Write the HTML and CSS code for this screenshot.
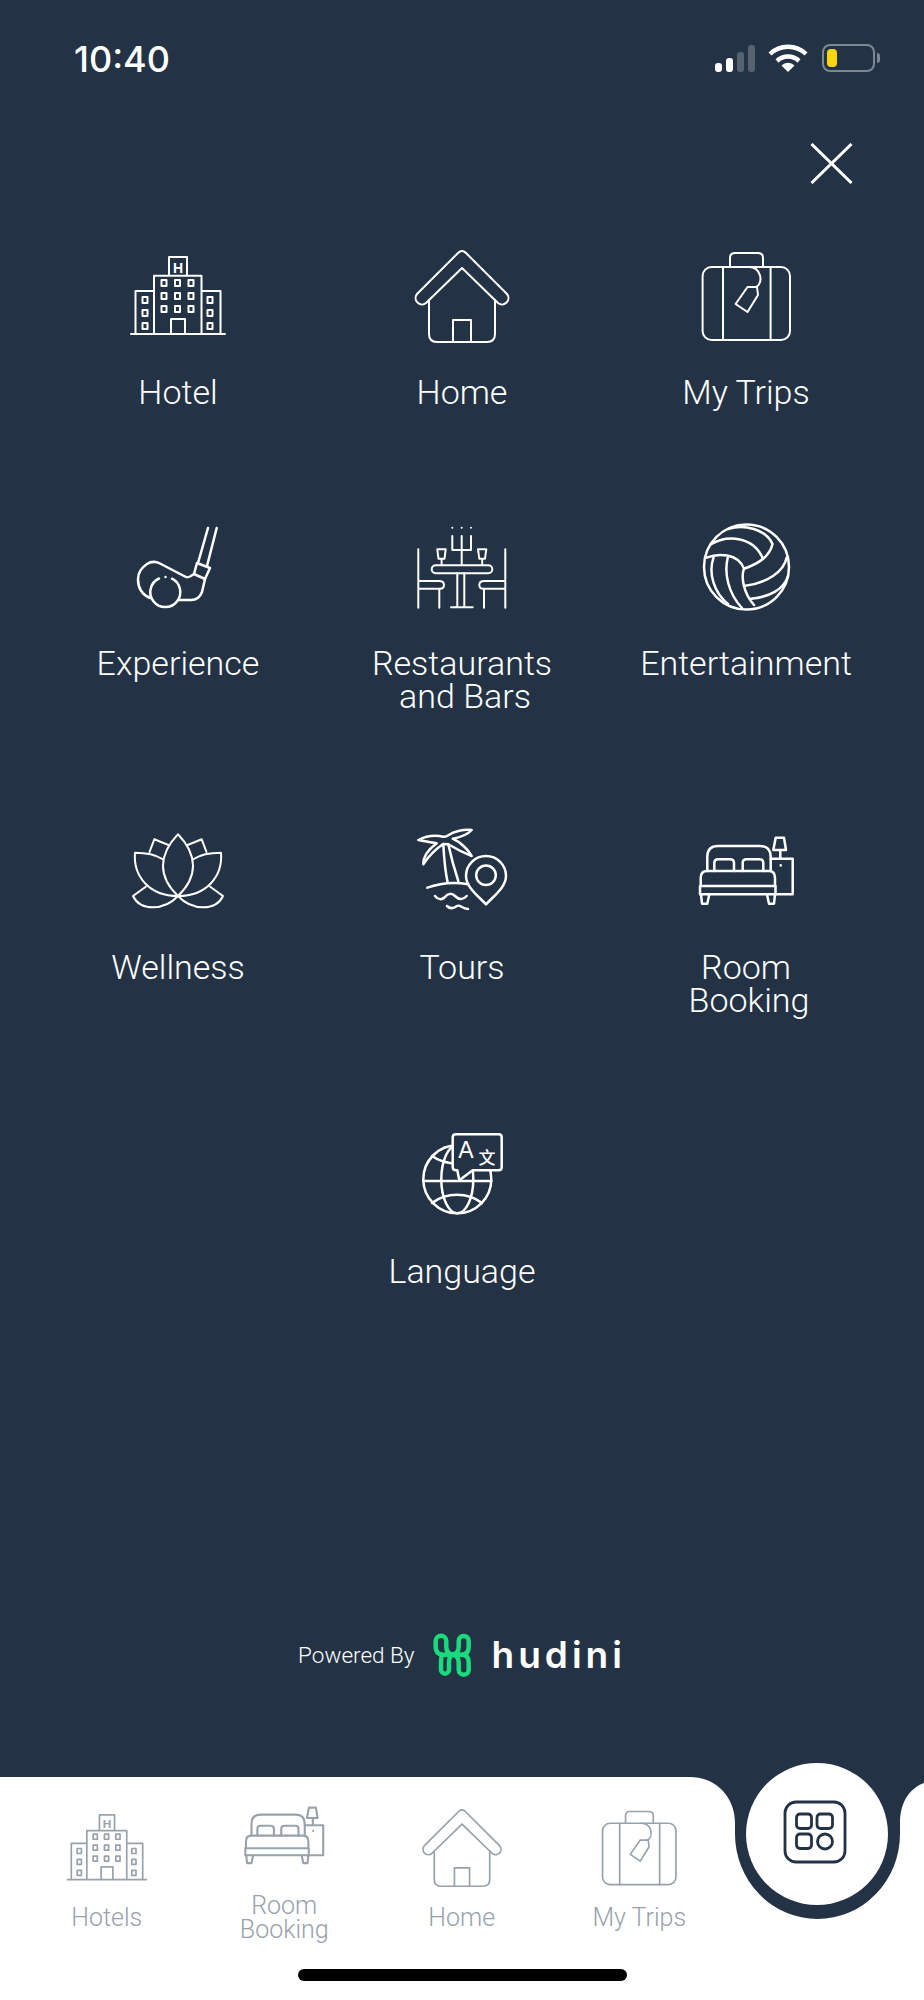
FILE: index.html
```html
<!DOCTYPE html>
<html lang="en">
<head>
<meta charset="utf-8">
<title>Menu</title>
<link rel="stylesheet" href="styles.css">
</head>
<body>
<svg class="defs" width="0" height="0" aria-hidden="true">
  <symbol id="i-hotel" viewBox="0 0 100 100">
    <path d="M3 84H97M7.500 84V41H26M92.500 84V41H73.500M26 84V25.700H73.500V84M41 25.700V7H59V25.700M43 84V69H57V84"/>
    <g class="win">
      <rect x="33.500" y="30" width="5" height="6"/><rect x="47" y="30" width="5" height="6"/><rect x="60.500" y="30" width="5" height="6"/>
      <rect x="33.500" y="43" width="5" height="6"/><rect x="47" y="43" width="5" height="6"/><rect x="60.500" y="43" width="5" height="6"/>
      <rect x="33.500" y="56" width="5" height="6"/><rect x="47" y="56" width="5" height="6"/><rect x="60.500" y="56" width="5" height="6"/>
      <rect x="14.500" y="47" width="5" height="6"/><rect x="14.500" y="60" width="5" height="6"/><rect x="14.500" y="73" width="5" height="6"/>
      <rect x="79.500" y="47" width="5" height="6"/><rect x="79.500" y="60" width="5" height="6"/><rect x="79.500" y="73" width="5" height="6"/>
    </g>
  </symbol>
  <symbol id="i-home" viewBox="0 0 100 100">
    <path d="M50 18L86 53A6.400 6.400 0 0 0 95 44L54 3Q50 -1 46 3L5 44A6.400 6.400 0 0 0 14 53Z"/>
    <path d="M17 50V84Q17 92 25 92H75Q83 92 83 84V50M41 92V70H59V92"/>
  </symbol>
  <symbol id="i-trips" viewBox="0 0 100 100">
    <rect x="6.600" y="17" width="87.400" height="73" rx="9"/>
    <path d="M27 17V90M74.600 17V90M34 17V8Q34 3 39 3H62Q67 3 67 8V17M53 17C65 17 68 33 60 37"/>
    <path d="M51.500 37L61 37L62 45L51.500 62L39.600 54Z"/>
  </symbol>
  <symbol id="i-golf" viewBox="0 0 100 100">
    <g class="th">
      <path d="M80 7L70 42M88.700 7L79 45M69 42L82 47L77 58L66 53Z"/>
      <path d="M66 53L62 55.500Q59 57 56 55L32 42.500Q25 39 19 43Q10 49 10 58Q10 72 22 77M77 58L74 71Q71 79 63 79H51"/>
      <path d="M31 57.500A15 15 0 1 0 44 57.700M37.500 56V56.100"/>
    </g>
  </symbol>
  <symbol id="i-dine" viewBox="0 0 100 100">
    <path d="M40.300 6.700V6.800M49.700 6.700V6.800M59 6.700V6.800M49.700 15V44M40.300 15V29H59V15"/>
    <path d="M25.300 28.300H33.700L32.500 37.700H26.500ZM29.600 37.700V44.300M66 28.300H74.300L73 37.700H67.300ZM70.200 37.700V44.300"/>
    <rect x="19.700" y="44.300" width="60.600" height="8" rx="4"/>
    <path d="M45.300 52.300V86M52.300 52.300V86M39 86.300H60.700"/>
    <path d="M6.300 28.300V86.700M6.300 60H27Q32 60 32 64Q32 67.700 28 67.700H6.300M27.300 67.700V86.700"/>
    <path d="M93.300 28.300V86.700M93.300 60H72.300Q67.300 60 67.300 64Q67.300 67.700 71.300 67.700H93.300M72 67.700V86.700"/>
  </symbol>
  <symbol id="i-ball" viewBox="0 0 100 100">
    <g class="th">
      <circle cx="50.500" cy="46" r="42.500"/>
      <path d="M10.500 36.700C22 32 42 32 48 47.700M15 23.300C32 13 58 16 67 38M32 8C48 3 70 8 76.500 23M76.500 23C74 35 62 43 48 47.700C45 55 47 72 58 84"/>
      <path d="M90.600 36.700C88 50 72 62 48 65M92 55C88 68 74 76 55 77.700M31.700 36.700C28 52 32 72 46 87M17.500 36.700C12 52 18 72 32 83"/>
    </g>
  </symbol>
  <symbol id="i-lotus" viewBox="0 0 100 100">
    <path d="M50 9.300C30 30 30 52 50 71C70 52 70 30 50 9.300Z"/>
    <path d="M34.300 34C26 28.500 16 27.700 7 27.700C5 52 22 71 50 71C78 71 95 52 93 27.700C84 27.700 74 28.500 65.700 34"/>
    <path d="M21.500 27L26.300 14.300L40.400 20M78.500 27L73.700 14.300L59.600 20"/>
    <path d="M17.800 61.700L5 71C12 86 36 86 50 71C64 86 88 86 95 71L82.200 61.700"/>
  </symbol>
  <symbol id="i-tours" viewBox="0 0 100 100">
    <g class="th">
      <path d="M31.300 19.300C32 32 33 46 35.700 57.700M36.300 19.300C39 32 43 46 46.300 56M15.300 62.700C28 58 44 57 56.300 59.300"/>
      <path d="M36.300 10.300C42 6 52 4 59.700 5C56 9 50 12 40.700 13.700C48 17 56 24 59.700 31C52 28 44 24 36.300 19.300L31 19C24 24 16 32 11.300 39.300C11 32 17 24 24.700 18.300C18 17 12 16 6.300 15C14 11 24 10 31.300 11.700Q34 12 36.300 10.300Z"/>
      <path d="M74 79.300C66 71 54 62 54 51A20 20 0 0 1 94 51C94 62 82 71 74 79.300Z"/>
      <circle cx="74" cy="50.300" r="9.800"/>
      <path d="M23 71C26 75 30 75 33 72C36 68 40 68 43 71C47 75 51 75 54.700 71M35 81C38 84 41 84 45 81C48 79 50 84 56 84"/>
    </g>
  </symbol>
  <symbol id="i-bed" viewBox="0 0 100 100">
    <g class="th">
      <path d="M11.300 46V32Q11.300 21 22 21H64Q74.700 21 74.700 32V46"/>
      <path d="M18.300 46V38Q18.300 34.300 22 34.300H34Q38 34.300 38 38V46M46.700 46V38Q46.700 34.300 50.500 34.300H63.500Q67.300 34.300 67.300 38V46"/>
      <path d="M4.700 61V53Q4.700 46 11 46H73Q79 46 79 53V61"/>
      <rect x="4" y="61" width="75.500" height="8.300"/>
      <path d="M5 69.300L6 78.700H11.300L13.300 69.300M71 69.300L73 78.700H78L79 69.300"/>
      <path d="M74.700 33.700H96.700V69.300H79.500M84.300 33.700V25M79.700 12.700H88L90 25H77.300ZM84.700 40.300V40.400"/>
    </g>
  </symbol>
</svg>

<div class="screen">
  <main class="main">
    <div class="status">
      <span class="time">10:40</span>
      <div class="status-icons">
        <div class="signal"><i class="bar b1"></i><i class="bar b2"></i><i class="bar b3"></i><i class="bar b4"></i></div>
        <svg class="wifi" width="40" height="28" viewBox="0 0 40 28">
          <path class="wifi-arc" d="M2 10A26 26 0 0 1 38 10M9 17A16 16 0 0 1 31 17"/>
          <path class="wifi-dot" d="M20 28L13.500 21.500A9 9 0 0 1 26.500 21.500Z"/>
        </svg>
        <div class="battery"><i class="charge"></i></div>
      </div>
    </div>
    <div class="close-row">
      <svg class="close" width="43" height="41" viewBox="0 0 43 41"><path d="M1.500 1L41.500 40M41.500 1L1.500 40"/></svg>
    </div>
    <div class="grid">
      <a class="cell"><svg class="ico" viewBox="0 0 100 100"><use href="#i-hotel"/><text class="ico-t" x="50" y="22.500" font-size="14" text-anchor="middle">H</text></svg><span class="lbl">Hotel</span></a>
      <a class="cell"><svg class="ico" viewBox="0 0 100 100"><use href="#i-home"/></svg><span class="lbl">Home</span></a>
      <a class="cell"><svg class="ico" viewBox="0 0 100 100"><use href="#i-trips"/></svg><span class="lbl">My Trips</span></a>
      <a class="cell"><svg class="ico" viewBox="0 0 100 100"><use href="#i-golf"/></svg><span class="lbl">Experience</span></a>
      <a class="cell"><svg class="ico" viewBox="0 0 100 100"><use href="#i-dine"/></svg><span class="lbl">Restaurants<span class="line2">and Bars</span></span></a>
      <a class="cell"><svg class="ico" viewBox="0 0 100 100"><use href="#i-ball"/></svg><span class="lbl">Entertainment</span></a>
      <a class="cell"><svg class="ico" viewBox="0 0 100 100"><use href="#i-lotus"/></svg><span class="lbl">Wellness</span></a>
      <a class="cell"><svg class="ico" viewBox="0 0 100 100"><use href="#i-tours"/></svg><span class="lbl">Tours</span></a>
      <a class="cell"><svg class="ico" viewBox="0 0 100 100"><use href="#i-bed"/></svg><span class="lbl">Room<span class="line2">Booking</span></span></a>
      <a class="cell cell-mid">
        <svg class="ico" viewBox="0 0 100 100">
          <g class="th">
            <circle cx="45.300" cy="50.300" r="34"/>
            <ellipse cx="45.300" cy="50.300" rx="16" ry="34"/>
            <path d="M11.300 52H79.300M20 27C34 37 56 37 70 27M20 74C34 63 56 63 70 74"/>
            <path class="bubble" d="M44 5.300H86.700Q89.700 5.300 89.700 8.300V38.300Q89.700 41.300 86.700 41.300H60.700L47.300 51.300L45.300 41.300H44Q40.700 41.300 40.700 38.300V8.300Q40.700 5.300 44 5.300Z"/>
          </g>
          <text class="ico-t ico-a" x="54" y="29" font-size="23" text-anchor="middle">A</text>
          <text class="ico-t ico-z" x="75" y="35" font-size="17" text-anchor="middle">文</text>
        </svg>
        <span class="lbl">Language</span>
      </a>
    </div>
    <div class="powered">
      <span class="powered-by">Powered By</span>
      <svg class="mark" width="38" height="44" viewBox="0 0 38 44">
        <path d="M10 21.700Q2.700 21.700 2.700 14V8A5.300 5.300 0 0 1 13.300 8V14Q13.300 21.700 21 21.700M10 21.700H28.500Q35.700 21.700 35.700 14V8A5 5 0 0 0 25.700 8V14Q25.700 21.700 18 21.700"/>
        <path d="M10 21.700Q8 21.700 8 29.400V36.700A4 4 0 0 0 16 36.700V29.400Q16 21.700 21 21.700M28.500 21.700Q35.700 21.700 35.700 29.400V36.700A5 5 0 0 1 25.700 36.700V29.400Q25.700 21.700 18 21.700"/>
      </svg>
      <span class="brand">hudini</span>
    </div>
  </main>

  <footer class="footer">
    <svg class="notch" width="924" height="143" viewBox="0 0 924 143">
      <path d="M690 0C716 0 735 20 735 46V57A82.500 85 0 0 0 900 57V46C900 25 910 11 924 6V0Z"/>
    </svg>
    <button class="fab" type="button">
      <svg class="fab-ico" width="66" height="66" viewBox="0 0 66 66">
        <rect x="3" y="3" width="60" height="60" rx="11"/>
        <rect x="14.500" y="15" width="15" height="14.500" rx="3.500"/>
        <rect x="35" y="15" width="15.500" height="14.500" rx="3.500"/>
        <rect x="14.500" y="35" width="15" height="14.500" rx="3.500"/>
        <circle cx="43" cy="42.500" r="7.500"/>
      </svg>
    </button>
    <nav class="nav">
      <a class="nav-item"><svg class="nav-ico" viewBox="0 0 100 100"><use href="#i-hotel"/><text class="ico-t" x="50" y="22.500" font-size="14" text-anchor="middle">H</text></svg><span class="nav-lbl">Hotels</span></a>
      <a class="nav-item"><svg class="nav-ico" viewBox="0 0 100 100"><use href="#i-bed"/></svg><span class="nav-lbl">Room<br>Booking</span></a>
      <a class="nav-item"><svg class="nav-ico" viewBox="0 0 100 100"><use href="#i-home"/></svg><span class="nav-lbl">Home</span></a>
      <a class="nav-item"><svg class="nav-ico" viewBox="0 0 100 100"><use href="#i-trips"/></svg><span class="nav-lbl">My Trips</span></a>
    </nav>
    <div class="home-bar"></div>
  </footer>
</div>
</body>
</html>
```
FILE: styles.css
```css
* { box-sizing: border-box; }
html, body { margin: 0; padding: 0; background: #233345; }
.defs { position: absolute; }
.screen {
  width: 924px; height: 2000px; display: flex; flex-direction: column;
  background: #233345; color: #fff; overflow: hidden;
  font-family: Roboto, "Noto Sans", sans-serif;
}
.main { flex: 1; display: flex; flex-direction: column; }

.status { height: 72px; padding: 44px 49px 0 74px; display: flex; justify-content: space-between; align-items: center; }
.time { font-family: Inter, sans-serif; font-weight: 500; font-size: 36px; line-height: 30px; position: relative; top: 1px; }
.status-icons { display: flex; align-items: flex-end; height: 28px; }
.signal { display: flex; align-items: flex-end; gap: 3.500px; height: 27px; margin-right: 13px; }
.bar { display: block; width: 7.500px; border-radius: 3px; background: #fff; }
.b1 { height: 9px; } .b2 { height: 14px; }
.b3 { height: 20px; background: #56636f; } .b4 { height: 27px; background: #56636f; }
.wifi { margin-right: 14px; }
.wifi-arc { fill: none; stroke: #fff; stroke-width: 4.500; }
.wifi-dot { fill: #fff; }
.battery { position: relative; width: 53px; height: 28px; padding: 3px; border: 2px solid #7d8894; border-radius: 8px; }
.battery::after { content: ""; position: absolute; left: 53px; top: 7px; width: 3px; height: 10px; border-radius: 0 3px 3px 0; background: #7d8894; }
.charge { display: block; width: 10px; height: 18px; border-radius: 4px; background: #ffd60a; }

.close-row { display: flex; justify-content: flex-end; padding: 71px 71px 0 0; }
.close { fill: none; stroke: #fff; stroke-width: 3; display: block; }

.grid { display: grid; grid-template-columns: repeat(3, 284px); justify-content: center; row-gap: 111px; margin-top: 66px; }
.cell { display: flex; flex-direction: column; align-items: center; text-align: center; }
.cell-mid { grid-column: 2; }
.ico { width: 100px; height: 100px; overflow: visible; color: #fff; }
.ico, .nav-ico { fill: none; stroke: currentColor; stroke-width: 2; stroke-linecap: round; stroke-linejoin: round; }
.th { stroke-width: 2.500; }
.win { stroke-width: 2; }
.ico-t { fill: currentColor; stroke: none; font-family: "Liberation Sans", sans-serif; font-weight: 700; }
.ico-a { font-weight: 400; }
.ico-z { font-family: "Noto Sans CJK SC", sans-serif; font-weight: 500; }
.bubble { fill: #233345; }
.lbl { margin-top: 26px; font-weight: 300; font-size: 34px; line-height: 33.500px; }
.line2 { display: block; margin-left: 6px; }

.powered { margin-top: auto; margin-bottom: 100px; display: flex; align-items: center; justify-content: center; }
.powered-by { font-weight: 300; font-size: 22.500px; margin-right: 18px; }
.mark { fill: none; stroke: #18dc7c; stroke-width: 4.500; margin-right: 21px; }
.brand { font-family: Inter, sans-serif; font-weight: 600; font-size: 37px; line-height: 44px; letter-spacing: 4px; }

.footer { position: relative; height: 223px; background: #fff; flex: none; display: flex; flex-direction: column; align-items: stretch; padding-top: 20px; }
.notch { position: absolute; left: 0; top: 0; fill: #233345; }
.fab { position: absolute; left: 746px; top: -14px; width: 142px; height: 142px; padding: 0; border: 0; border-radius: 50%; background: #fff; display: flex; align-items: center; justify-content: center; }
.fab-ico { fill: none; stroke: #233345; stroke-width: 2.800; display: block; margin: -4px 5px 0 0; }
.nav { display: flex; align-items: center; height: 145px; padding-left: 18px; }
.nav-item { width: 177.500px; display: flex; flex-direction: column; align-items: center; text-align: center; color: #98a2ad; }
.nav-ico { width: 84px; height: 84px; overflow: visible; }
.nav-lbl { margin-top: 13px; font-weight: 300; font-size: 25px; line-height: 24px; }
.home-bar { width: 329px; height: 12px; margin: 27px 0 0 298px; border-radius: 6px; background: #000; }
```
